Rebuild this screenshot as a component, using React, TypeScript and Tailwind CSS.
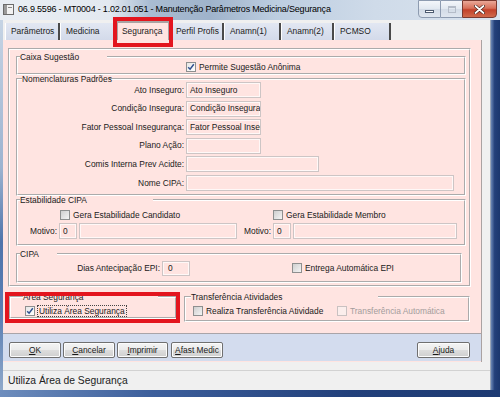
import { ReactNode } from "react";

const UI = "font-['Liberation_Sans',Arial,sans-serif] text-[8.4px] text-[#1a1a1a]";

function Check({ checked = false, disabled = false }: { checked?: boolean; disabled?: boolean }) {
  let box = "border-[#8e8f8f] bg-[linear-gradient(135deg,#cfcfcf,#f4f4f4)]";
  if (checked) box = "border-[#8e8f8f] bg-[linear-gradient(135deg,#e6e6e6,#ffffff)]";
  if (disabled) box = "border-[#c9c1c1] bg-[#fbeeec]";
  return (
    <span className={`inline-flex w-[10px] h-[10px] shrink-0 items-center justify-center border ${box}`}>
      {checked && (
        <svg width="8" height="8" viewBox="0 0 8 8">
          <path d="M1.2 4.2 L3.1 6.2 L6.8 1.3" fill="none" stroke="#30508f" strokeWidth="1.5" />
        </svg>
      )}
    </span>
  );
}

function Field({ w, value, pad = "px-[3px]" }: { w: string; value?: string; pad?: string }) {
  return (
    <div
      className={`h-[16px] ${w} shrink-0 border border-[#cdc5c5] shadow-[inset_0_0_0_1px_#fff8f7] ${pad} flex items-center overflow-hidden whitespace-nowrap`}
    >
      {value}
    </div>
  );
}

function Group({
  title,
  legend,
  className,
  children,
}: {
  title: string;
  legend: string;
  className: string;
  children: ReactNode;
}) {
  return (
    <fieldset className={`border-2 [border-style:groove] border-white min-w-0 ${className}`}>
      <legend className={`${legend} h-[8px] leading-[8px] whitespace-nowrap`}>{title}</legend>
      {children}
    </fieldset>
  );
}

function Tab({ label, w, sep = true }: { label: string; w: string; sep?: boolean }) {
  return (
    <div
      className={`h-[17px] ${w} shrink-0 flex items-center pl-[5px] bg-[linear-gradient(#e2e7f2,#d3daea)] border-l border-white ${
        sep ? "border-r-[2px] border-r-[#4a4a4a]" : ""
      }`}
    >
      {label}
    </div>
  );
}

function Btn({ label, w, first }: { label: string; w: string; first: string }) {
  return (
    <div
      className={`h-[16px] ${w} shrink-0 flex items-center justify-center border border-[#707070] rounded-[2px] bg-[linear-gradient(#f4f4f4,#ebebeb_48%,#dddddd_52%,#cfcfcf)] shadow-[inset_0_0_0_1px_#fcfcfc]`}
    >
      <span>
        <span className="underline">{first}</span>
        {label}
      </span>
    </div>
  );
}

function NomRow({ label, w, value }: { label: string; w: string; value?: string }) {
  return (
    <div className="flex items-center h-[16px] gap-[2px]">
      <div className="w-[166px] text-right whitespace-nowrap">{label}</div>
      <Field w={w} value={value} />
    </div>
  );
}

export default function App() {
  return (
    <div className={`w-[500px] h-[397px] overflow-hidden relative flex flex-col bg-[#1e3b73] ${UI}`}>
      {/* title bar */}
      <div className="h-[20px] shrink-0 flex items-start bg-[linear-gradient(90deg,#e9eef4_0%,#e3e9f0_22%,#a9bcd2_30%,#9fb3cb_42%,#bccde0_55%,#cfdbe9_75%,#d9e3ee_100%)]">
        <div className="mt-[4px] ml-[3px] w-[11px] h-[11px]">
          <svg width="11" height="11" viewBox="0 0 11 11">
            <rect x="0.5" y="0.5" width="10" height="10" fill="#f2f2f2" stroke="#6b6b6b" />
            <rect x="1" y="1" width="3" height="9" fill="#9a9a9a" />
            <rect x="5" y="3" width="4" height="1" fill="#8a8a8a" />
          </svg>
        </div>
        <div className="ml-[4px] mt-[4px] font-['Liberation_Sans',Arial,sans-serif] text-[9px] tracking-[-0.2px] text-black leading-[11px] whitespace-nowrap">
          06.9.5596 - MT0004 - 1.02.01.051 - Manutenção Parâmetros Medicina/Segurança
        </div>
        <div className="ml-auto mr-[3px] flex h-[18px]">
          <div className="w-[23px] h-[18px] border border-[#8d9bb0] rounded-bl-[4px] bg-[linear-gradient(#f3f6fa,#e1e8f0_50%,#d2dbe6_50%,#dfe6ef)] flex items-end justify-center pb-[4px]">
            <div className="w-[9px] h-[3px] bg-white border border-[#4d5b70]" />
          </div>
          <div className="w-[21px] h-[18px] border-y border-[#8d9bb0] bg-[linear-gradient(#f3f6fa,#e1e8f0_50%,#d2dbe6_50%,#dfe6ef)] flex items-center justify-center">
            <div className="w-[8px] h-[7px] border border-[#b4bcc8] border-t-2" />
          </div>
          <div className="w-[35px] h-[18px] border border-[#7a3a30] rounded-br-[4px] bg-[linear-gradient(#e9a898,#d7705a_45%,#c2412a_55%,#d06a4c)] flex items-center justify-center">
            <svg width="11" height="9" viewBox="0 0 11 9">
              <path d="M1.5 1 L9.5 8 M9.5 1 L1.5 8" stroke="#3a1a14" strokeWidth="3" strokeLinecap="round" />
              <path d="M1.5 1 L9.5 8 M9.5 1 L1.5 8" stroke="#ffffff" strokeWidth="1.8" strokeLinecap="round" />
            </svg>
          </div>
        </div>
      </div>

      <div className="flex flex-1 min-h-0">
        {/* left frame */}
        <div className="w-[3px] bg-[linear-gradient(180deg,#c6d4e4,#9cb3d0_40%,#4f74ab_60%,#5b7fb4_80%,#8fa8c9)]" />

        {/* client area */}
        <div className="w-[487px] bg-[#f0f0f0] flex flex-col">
          {/* tabs */}
          <div className="h-[20px] flex items-end pl-[2px]">
            <Tab label="Parâmetros" w="w-[55px]" />
            <Tab label="Medicina" w="w-[56px]" sep={false} />
            <div className="h-[19px] w-[54px] shrink-0 flex items-center pl-[4px] pb-[1px] bg-[#ffe4e1] border-x-2 border-t-2 border-[#a9a3a3]">
              Segurança
            </div>
            <Tab label="Perfil Profis" w="w-[54px]" />
            <Tab label="Anamn(1)" w="w-[57px]" />
            <Tab label="Anamn(2)" w="w-[53px]" />
            <Tab label="PCMSO" w="w-[57px]" />
          </div>

          {/* tab page */}
          <div className="h-[322px] w-[479px] bg-[#ffe4e1] border-r border-[#aaa2a2] flex flex-col">
            <div className="ml-[5px] mt-[8px] w-[463px] border-2 [border-style:groove] border-white pb-[2px] flex flex-col">
              <Group title="Caixa Sugestão" legend="ml-[2px] w-[87px]" className="ml-[6px] mt-[3px] w-[450px]">
                <div className="h-[12px] flex items-center pl-[168px] gap-[3px]">
                  <Check checked />
                  <span>Permite Sugestão Anônima</span>
                </div>
              </Group>

              <Group title="Nomenclaturas Padrões" legend="ml-[4px] w-[87px]" className="ml-[6px] w-[450px] pb-[3px]">
                <div className="-mt-[1px] flex flex-col gap-[2.6px]">
                  <NomRow label="Ato Inseguro:" w="w-[75px]" value="Ato Inseguro" />
                  <NomRow label="Condição Insegura:" w="w-[75px]" value="Condição Insegura" />
                  <NomRow label="Fator Pessoal Insegurança:" w="w-[75px]" value="Fator Pessoal Insegurança" />
                  <NomRow label="Plano Ação:" w="w-[75px]" />
                  <NomRow label="Comis Interna Prev Acidte:" w="w-[133px]" />
                  <NomRow label="Nome CIPA:" w="w-[268px]" />
                </div>
              </Group>

              <Group title="Estabilidade CIPA" legend="ml-[2px] w-[133px]" className="ml-[6px] w-[450px] pt-[6px] pb-[5px]">
                <div className="h-[11px] flex items-center">
                  <div className="ml-[42px] w-[213px] flex items-center gap-[3px]">
                    <Check />
                    <span>Gera Estabilidade Candidato</span>
                  </div>
                  <div className="flex items-center gap-[3px]">
                    <Check />
                    <span>Gera Estabilidade Membro</span>
                  </div>
                </div>
                <div className="mt-[2px] flex items-center gap-[2px]">
                  <div className="w-[39px] text-right">Motivo:</div>
                  <Field w="w-[18px]" value="0" />
                  <Field w="w-[158px]" />
                  <div className="w-[32px] text-right">Motivo:</div>
                  <Field w="w-[18px]" value="0" />
                  <Field w="w-[164px]" />
                </div>
              </Group>

              <Group title="CIPA" legend="ml-[2px] w-[37px]" className="ml-[6px] mt-[4px] w-[446px] pt-[3px] pb-[5px]">
                <div className="h-[15px] flex items-center">
                  <div className="w-[142px] text-right">Dias Antecipação EPI:</div>
                  <div className="ml-[2px] h-[15px] w-[28px] border border-[#cdc5c5] shadow-[inset_0_0_0_1px_#fff8f7] pl-[5px] flex items-center">
                    0
                  </div>
                  <div className="ml-[102px] flex items-center gap-[3px]">
                    <Check />
                    <span>Entrega Automática EPI</span>
                  </div>
                </div>
              </Group>
            </div>

            {/* lower groups */}
            <div className="mt-[6px] flex items-start">
              <Group title="Área Segurança" legend="ml-[12px] w-[135px]" className="ml-[6px] w-[168px] pt-[5px]">
                <div className="h-[11px] flex items-center pl-[14px] gap-[2px]">
                  <Check checked />
                  <span className="h-[12px] leading-[10px] px-[1px] border border-dotted border-[#444]">
                    Utiliza Área Segurança
                  </span>
                </div>
              </Group>
              <Group title="Transferência Atividades" legend="ml-[5px] w-[187px]" className="ml-[7px] w-[286px] pt-[5px] pb-[3px]">
                <div className="h-[11px] flex items-center pl-[7px]">
                  <div className="w-[144px] flex items-center gap-[3px]">
                    <Check />
                    <span className="whitespace-nowrap">Realiza Transferência Atividade</span>
                  </div>
                  <div className="flex items-center gap-[3px] text-[#a39c9c]">
                    <Check disabled />
                    <span className="whitespace-nowrap">Transferência Automática</span>
                  </div>
                </div>
              </Group>
            </div>

            {/* button bar */}
            <div className="mt-[11px] h-[28px] border-t border-[#a9a4a8] bg-[#d3dcee] flex items-start pt-[8px] pl-[6px] pr-[11px]">
              <div className="flex gap-[2px]">
                <Btn first="O" label="K" w="w-[52px]" />
                <Btn first="C" label="ancelar" w="w-[52px]" />
                <Btn first="I" label="mprimir" w="w-[51px]" />
                <div className="ml-[1px]">
                  <Btn first="A" label="fast Medic" w="w-[52px]" />
                </div>
              </div>
              <div className="ml-auto">
                <Btn first="A" label="juda" w="w-[53px]" />
              </div>
            </div>
          </div>

          {/* status bar */}
          <div className="mt-[8px] h-[20px] border-t border-[#d2d2d2] flex items-center pl-[5px] text-[10.3px] text-[#222] whitespace-nowrap">
            Utiliza Área de Segurança
          </div>
        </div>

        {/* right frame */}
        <div className="flex-1 border-l border-[#9aa6b8] bg-[linear-gradient(90deg,#6a86b4,#23407a_40%,#1b376e)]" />
      </div>
      {/* bottom frame */}
      <div className="h-[7px] shrink-0 bg-[linear-gradient(90deg,#6d8dbd,#3d5f9c_30%,#22407b_70%,#1d3a72)]" />

      {/* red highlight annotations */}
      <div className="absolute left-[113px] top-[17px] w-[60px] h-[30px] border-4 border-[#e3151e]" />
      <div className="absolute left-[5px] top-[292px] w-[175px] h-[31px] border-4 border-[#e3151e]" />
    </div>
  );
}
